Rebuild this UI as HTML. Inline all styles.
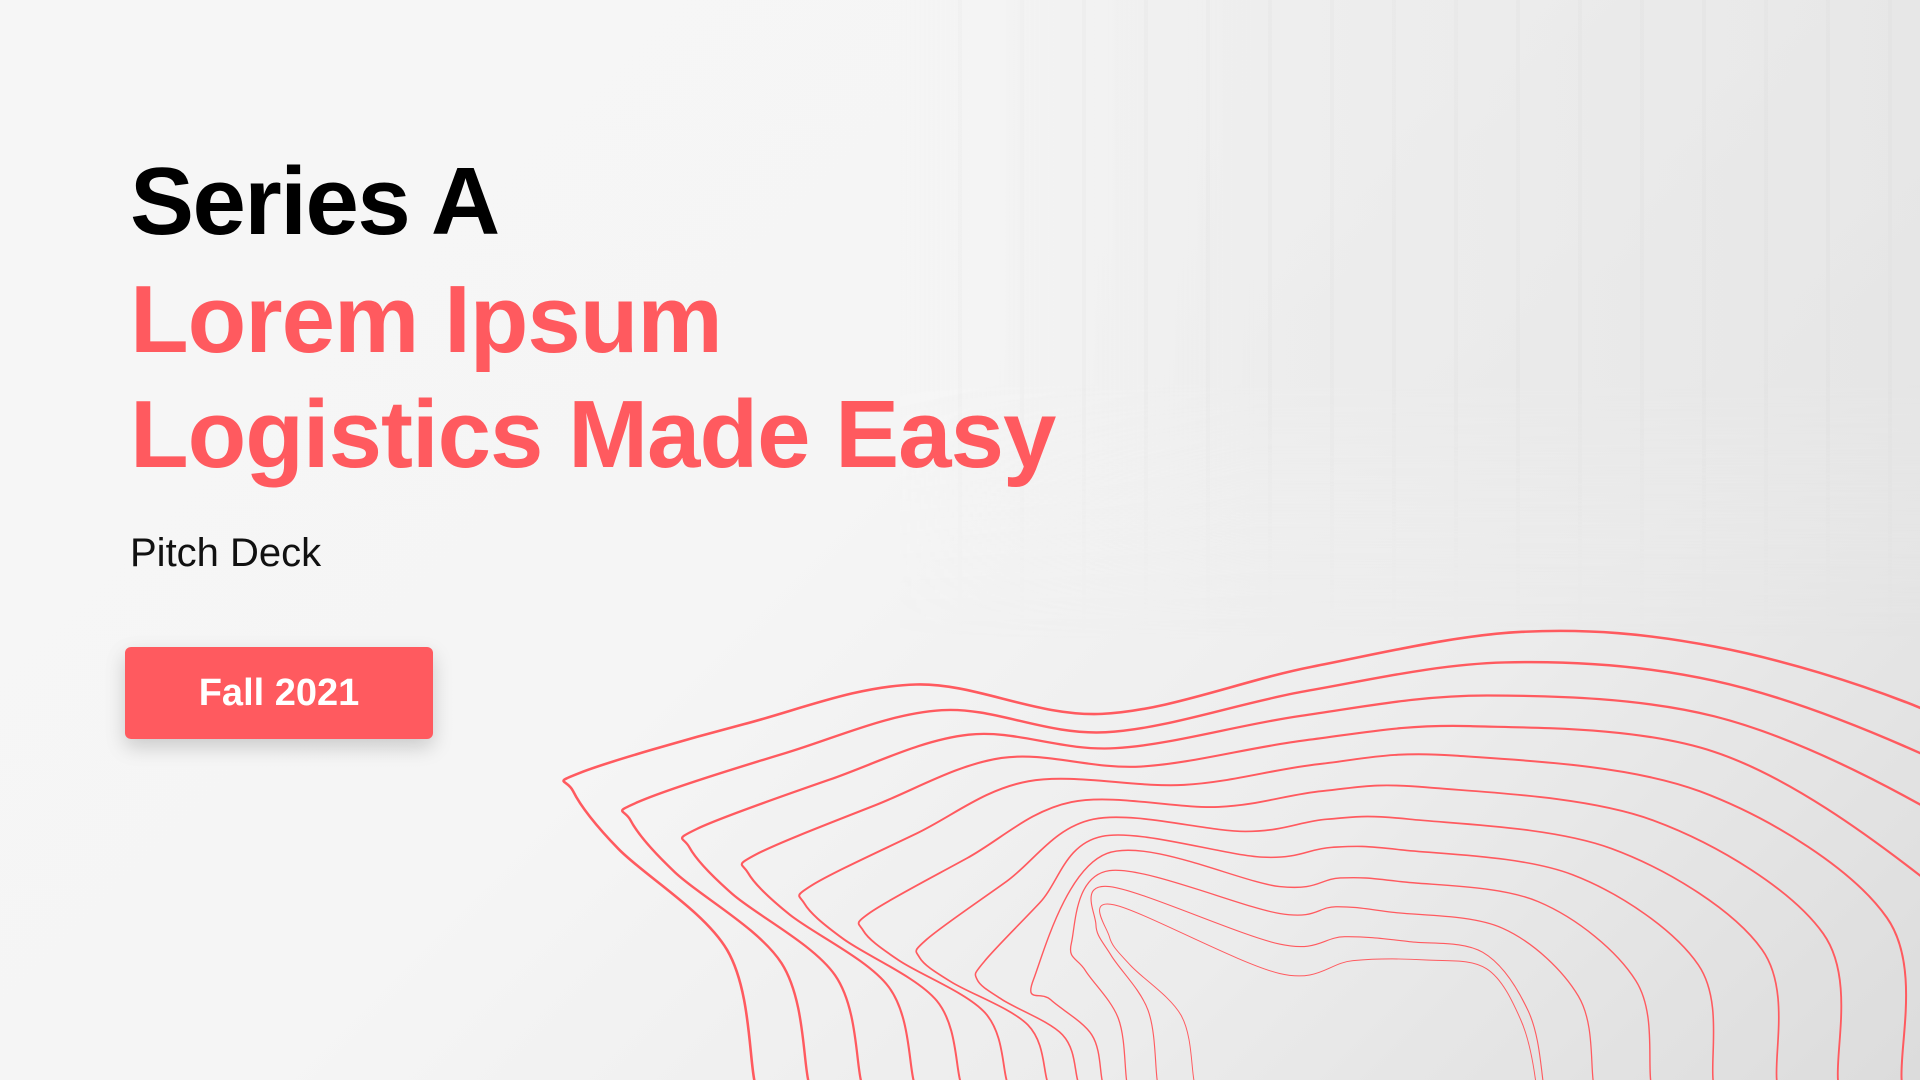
<!DOCTYPE html>
<html><head><meta charset="utf-8"><style>
html,body{margin:0;padding:0}
body{width:1920px;height:1080px;position:relative;overflow:hidden;font-family:"Liberation Sans",sans-serif;
background:linear-gradient(135deg,#f6f6f6 0%,#f5f5f5 45%,#ececec 72%,#dcdcdc 100%);}
.ship{position:absolute;left:900px;top:0;width:1020px;height:640px;
background:
repeating-linear-gradient(90deg,rgba(0,0,0,0) 0 58px,rgba(0,0,0,.015) 58px 62px),
linear-gradient(90deg,rgba(245,245,245,1) 0%,rgba(235,235,235,.7) 35%,rgba(228,228,228,.7) 100%);
-webkit-mask-image:linear-gradient(180deg,#000 0%,#000 60%,transparent 100%);}
.t{position:absolute;left:130px;line-height:1;white-space:nowrap}
.h{font-size:96px;font-weight:bold;letter-spacing:-1.5px}
.r{letter-spacing:-1px}
.btn{position:absolute;left:125px;top:647px;width:308px;height:92px;background:#ff5a5f;border-radius:6px;
box-shadow:0 8px 20px rgba(0,0,0,.18);color:#fff;font-weight:bold;font-size:38px;display:flex;align-items:center;justify-content:center}
svg{position:absolute;left:0;top:0}
</style></head><body>
<div class="ship"></div>
<div class="t h" style="top:154px;color:#000">Series A</div>
<div class="t h r" style="top:272px;color:#ff5a5f">Lorem Ipsum</div>
<div class="t h r" style="top:387px;color:#ff5a5f">Logistics Made Easy</div>
<div class="t" style="top:533px;font-size:40px;color:#111">Pitch Deck</div>
<div class="btn">Fall 2021</div>
<svg id="s" width="1920" height="1080" viewBox="0 0 1568 882" preserveAspectRatio="none"></svg>
<script>
var L=[616,660,703,746,784,822,855,880,900,920,945,975];
var B=[[468,646],[515,670],[563,692],[611,713],[657,738],[705,760],[751,782],[798,800],[844,800],[875,770],[895,755],[906,765]];
var H=[[748,559],[769,580],[791,600],[818,619],[840,638],[875,655],[893,669],[900,683],[904,697],[906,711],[906,724],[910,739]];
var DX=[900,903,911,932,967,995,1017,1031,1045,1045,1045,1045],DY=[583,598,611,626,641,659,679,700,724,746,771,795];
var T=[[1243,516],[1229,541],[1215,568],[1201,593],[1187,617],[1165,643],[1151,669],[1144,694],[1144,720],[1137,745],[1151,769],[1165,784]];
var RE=[[[1400,528],[1568,578],[1700,650]],[[1400,556],[1568,615],[1700,690]],[[1400,585],[1568,657],[1680,740]],[[1400,614],[1568,715],[1640,800]]];
var E=[0,0,0,0,1553,1501,1451,1399,1348,1301,1260,1254];
var s=document.getElementById('s'),h='';
for(var k=0;k<12;k++){
 var l=L[k],b=B[k],hh=H[k],t=T[k],P=[];
 P.push([l+3,905]);P.push([l,882]);
 P.push([l-0.15*(l-b[0]),b[1]+(882-b[1])*0.55]);
 P.push([b[0]+(l-b[0])*0.25,b[1]+(882-b[1])*0.2]);
 P.push(b);
 if(hh[0]-b[0]>80){P.push([b[0]+6,b[1]-15]);
  P.push([(b[0]+hh[0])/2,(b[1]+hh[1])/2-0.04*(hh[0]-b[0])]);}
 P.push(hh);
 var d=[DX[k],DY[k]];P.push(d);
 P.push([(d[0]+t[0])/2,(d[1]+t[1])/2-5]);
 P.push(t);
 if(k<4){RE[k].forEach(function(p){P.push(p)});}
 else{var e=E[k];P.push([t[0]+(e-t[0])*0.55,t[1]+(e-t[0])*0.08]);
  P.push([e-12,t[1]+(882-t[1])*0.5]);P.push([e,882]);P.push([e,920]);}
 var dd='M'+P[0][0]+','+P[0][1];
 for(var j=0;j<P.length-1;j++){var p0=P[Math.max(j-1,0)],p1=P[j],p2=P[j+1],p3=P[Math.min(j+2,P.length-1)];
  dd+=' C'+(p1[0]+(p2[0]-p0[0])/6)+','+(p1[1]+(p2[1]-p0[1])/6)+' '+(p2[0]-(p3[0]-p1[0])/6)+','+(p2[1]-(p3[1]-p1[1])/6)+' '+p2[0]+','+p2[1];}
 h+='<path d="'+dd+'" fill="none" stroke="#ff5a5f" stroke-width="'+(2.1-1.3*k/11)+'"/>';
}
s.innerHTML=h;
</script>
</body></html>
